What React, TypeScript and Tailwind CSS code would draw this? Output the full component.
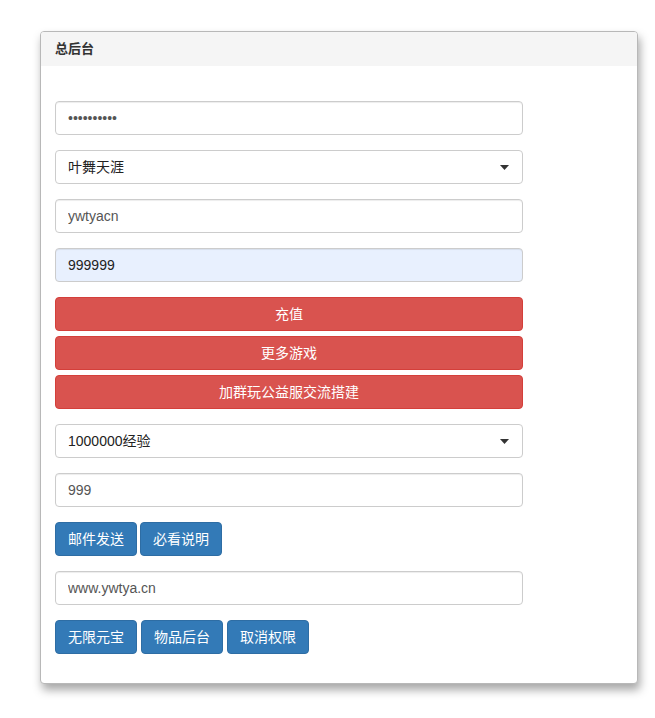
import React from "react";

const font = { fontFamily: '"Liberation Sans", "Noto Sans CJK SC", Arial, sans-serif' };

function Field({ value, type = "text", filled = false }: { value: string; type?: string; filled?: boolean }) {
  return (
    <input
      type={type}
      readOnly
      value={value}
      className={`block w-[468px] h-[34px] px-3 rounded-[4px] border border-[#ccc] text-[14px] outline-none shadow-[inset_0_1px_1px_rgba(0,0,0,0.075)] ${
        filled ? "bg-[#e8f0fe] text-[#222]" : "bg-white text-[#555]"
      }`}
      style={font}
    />
  );
}

function SelectBox({ value }: { value: string }) {
  return (
    <div className="flex items-center justify-between w-[468px] h-[34px] pl-3 pr-[12px] rounded-[4px] border border-[#ccc] bg-white text-[14px] text-[#222]">
      <span>{value}</span>
      <svg width="9" height="5" viewBox="0 0 9 5" className="mr-[1px]">
        <path d="M0 0 H9 L4.5 5 Z" fill="#333" />
      </svg>
    </div>
  );
}

function RedBtn({ children }: { children: React.ReactNode }) {
  return (
    <div className="flex items-center justify-center w-[468px] h-[34px] rounded-[4px] border border-[#d43f3a] bg-[#d9534f] text-white text-[14px]">
      {children}
    </div>
  );
}

function BlueBtn({ children }: { children: React.ReactNode }) {
  return (
    <div className="flex items-center justify-center w-[82px] h-[34px] rounded-[4px] border border-[#2e6da4] bg-[#337ab7] text-white text-[14px]">
      {children}
    </div>
  );
}

export default function App() {
  return (
    <div className="min-h-[718px] bg-white pt-[31px] pl-[40px]" style={font}>
      <div className="w-[598px] rounded-[4px] border border-[#b8b8b8] bg-white shadow-[2px_6px_10px_rgba(0,0,0,0.35)] overflow-hidden">
        <div className="h-[34px] bg-[#f5f5f5] px-[14px] flex items-center text-[13px] font-bold text-[#333]">
          总后台
        </div>
        <div className="px-[14px] pt-[35px] pb-[29px] flex flex-col">
          <Field type="password" value="ywtyacn123" />
          <div className="mt-[15px]"><SelectBox value="叶舞天涯" /></div>
          <div className="mt-[15px]"><Field value="ywtyacn" /></div>
          <div className="mt-[15px]"><Field value="999999" filled /></div>
          <div className="mt-[15px] flex flex-col gap-[5px]">
            <RedBtn>充值</RedBtn>
            <RedBtn>更多游戏</RedBtn>
            <RedBtn>加群玩公益服交流搭建</RedBtn>
          </div>
          <div className="mt-[15px]"><SelectBox value="1000000经验" /></div>
          <div className="mt-[15px]"><Field value="999" /></div>
          <div className="mt-[15px] flex gap-[3px]">
            <BlueBtn>邮件发送</BlueBtn>
            <BlueBtn>必看说明</BlueBtn>
          </div>
          <div className="mt-[15px]"><Field value="www.ywtya.cn" /></div>
          <div className="mt-[15px] flex gap-[4px]">
            <BlueBtn>无限元宝</BlueBtn>
            <BlueBtn>物品后台</BlueBtn>
            <BlueBtn>取消权限</BlueBtn>
          </div>
        </div>
      </div>
    </div>
  );
}
